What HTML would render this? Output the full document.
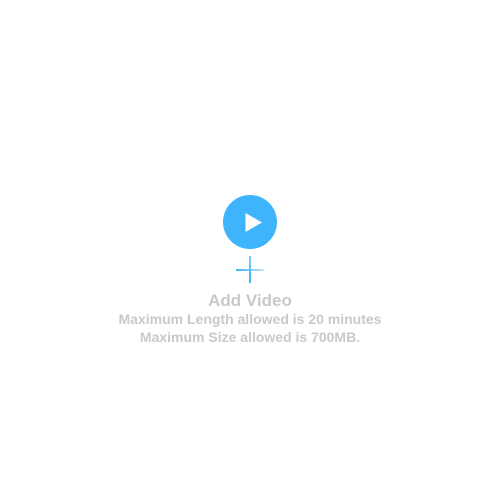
<!DOCTYPE html>
<html><head><style>
html,body{margin:0;padding:0;background:#fff;width:500px;height:500px;overflow:hidden}
.t{position:absolute;left:0;width:500px;text-align:center;font-family:"Liberation Sans",sans-serif;font-weight:bold;color:#c9c9c9;white-space:nowrap}
</style></head><body>
<svg width="500" height="500" style="position:absolute;left:0;top:0">
<defs>
<linearGradient id="h" x1="0" x2="1"><stop offset="0" stop-color="#3db4f9"/><stop offset="1" stop-color="#bfe6fc"/></linearGradient>
<linearGradient id="v" x1="0" y1="0" x2="0" y2="1"><stop offset="0" stop-color="#7ccdfb"/><stop offset="1" stop-color="#3db4f9"/></linearGradient>
</defs>
<circle cx="250" cy="222" r="27" fill="#3db4fb"/>
<polygon points="245.5,213 262,222.5 245.5,232" fill="#fff"/>
<rect x="236" y="269" width="28" height="2" fill="url(#h)"/>
<rect x="249" y="256" width="2" height="27" fill="url(#v)"/>
</svg>
<div class="t" style="top:291px;font-size:17px">Add Video</div>
<div class="t" style="top:311px;font-size:14px">Maximum Length allowed is 20 minutes</div>
<div class="t" style="top:329px;font-size:14px">Maximum Size allowed is 700MB.</div>
</body></html>
